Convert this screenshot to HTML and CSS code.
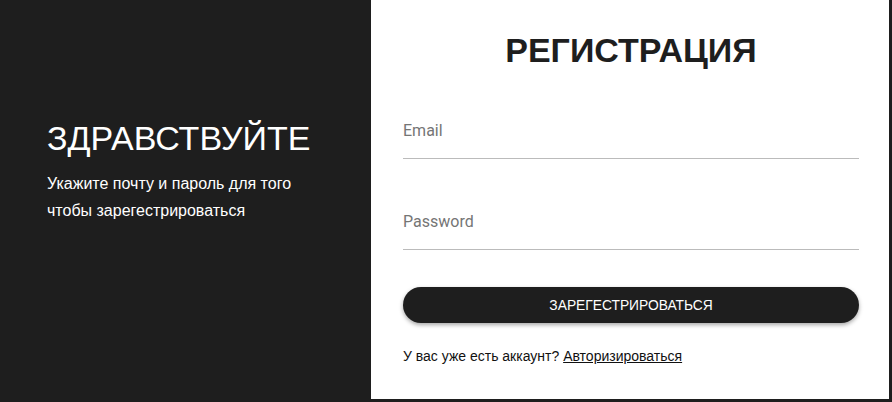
FILE: index.html
```html
<!DOCTYPE html>
<html lang="ru">
<head>
    <meta charset="UTF-8">
    <meta name="viewport" content="width=device-width, initial-scale=1.0">
    <title>Регистрация</title>
    <link rel="stylesheet" href="styles.css">
</head>
<body>
    <div class="page">
        <div class="welcome">
            <h2>ЗДРАВСТВУЙТЕ</h2>
            <p>Укажите почту и пароль для того чтобы зарегестрироваться</p>
        </div>
        <div class="panel">
            <h1>РЕГИСТРАЦИЯ</h1>
            <form>
                <div class="field">
                    <input type="email" name="email" placeholder="Email">
                </div>
                <div class="field">
                    <input type="password" name="password" placeholder="Password">
                </div>
                <button type="submit">ЗАРЕГЕСТРИРОВАТЬСЯ</button>
            </form>
            <p class="login">У вас уже есть аккаунт? <a href="#">Авторизироваться</a></p>
        </div>
    </div>
</body>
</html>
```

FILE: styles.css
```css
body {
    margin: 0;
    background: #1e1e1e;
    font-family: 'Liberation Sans', Arial, sans-serif;
}
.page {
    display: flex;
    height: 402px;
}
.welcome {
    width: 324px;
    padding: 114px 0 0 47px;
    color: #fff;
}
.welcome h2 {
    margin: 0;
    font-size: 34px;
    font-weight: normal;
    line-height: 48px;
}
.welcome p {
    margin: 8px 0 0;
    font-size: 16px;
    line-height: 27px;
    width: 260px;
}
.panel {
    width: 456px;
    height: 399px;
    padding: 0 30px 0 32px;
    background: #fff;
}
h1 {
    margin: 0;
    padding-top: 29px;
    text-align: center;
    color: #1e1e1e;
    font-size: 34px;
    line-height: 42px;
}
form {
    margin-top: 42px;
}
.field + .field {
    margin-top: 45px;
}
input {
    width: 100%;
    box-sizing: border-box;
    border: none;
    border-bottom: 1px solid #bbb;
    padding: 8px 0 18px;
    font-family: Roboto, sans-serif;
    font-size: 16px;
    color: #333;
    outline: none;
}
input::placeholder {
    color: #757575;
}
button {
    display: block;
    width: 100%;
    height: 36px;
    margin-top: 37px;
    background: #1e1e1e;
    color: #fff;
    border: none;
    border-radius: 18px;
    font-family: 'Liberation Sans', Arial, sans-serif;
    font-size: 13.8px;
    box-shadow: 0 2px 4px rgba(0,0,0,0.35);
    cursor: pointer;
}
.login {
    margin: 25px 0 0;
    font-size: 14px;
    color: #111;
}
.login a {
    color: #111;
}
```
